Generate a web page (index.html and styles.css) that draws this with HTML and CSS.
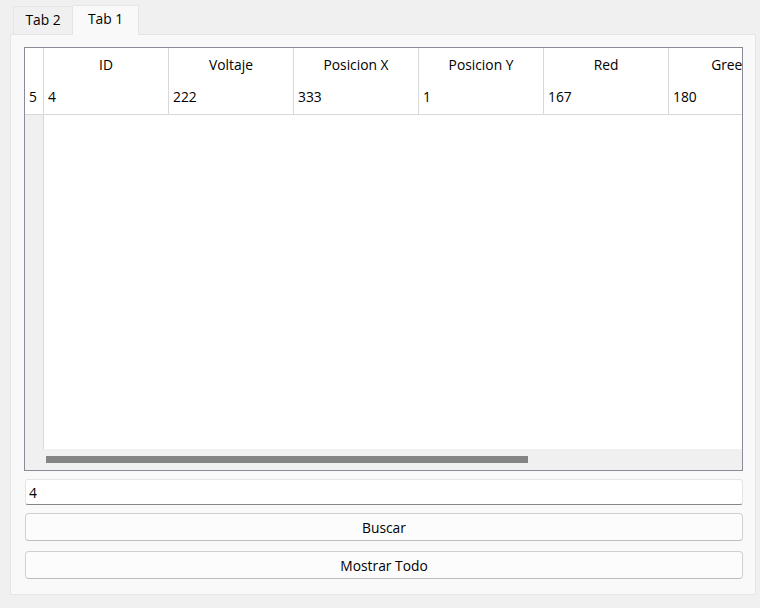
FILE: index.html
```html
<!DOCTYPE html>
<html>
<head>
<meta charset="utf-8">
<link rel="stylesheet" href="styles.css">
</head>
<body>
<div class="window">
  <div class="tabbar">
    <div class="tab">Tab 2</div>
    <div class="tab selected">Tab 1</div>
  </div>
  <div class="pane">
    <div class="table">
      <div class="grid">
        <div class="vhead">
          <div class="corner"></div>
          <div class="rowhead">5</div>
          <div class="vfill"></div>
        </div>
        <div class="body">
          <div class="hrow">
            <div class="hcell">ID</div>
            <div class="hcell">Voltaje</div>
            <div class="hcell">Posicion X</div>
            <div class="hcell">Posicion Y</div>
            <div class="hcell">Red</div>
            <div class="hcell">Green</div>
          </div>
          <div class="drow">
            <div class="dcell">4</div>
            <div class="dcell">222</div>
            <div class="dcell">333</div>
            <div class="dcell">1</div>
            <div class="dcell">167</div>
            <div class="dcell">180</div>
          </div>
        </div>
      </div>
      <div class="hscroll"><div class="thumb"></div></div>
    </div>
    <div class="lineedit">4</div>
    <div class="button">Buscar</div>
    <div class="button second">Mostrar Todo</div>
  </div>
</div>
</body>
</html>
```

FILE: styles.css
```css
* { box-sizing: border-box; }
html, body {
  margin: 0;
  padding: 0;
  background: #f0f0f0;
  width: 760px;
  height: 608px;
  overflow: hidden;
  font-family: "Segoe UI", "Open Sans", "Noto Sans", sans-serif;
  font-size: 13.8px;
  color: #000;
}
.window {
  padding: 5px 0 0 10px;
}
.tabbar {
  display: flex;
  align-items: flex-end;
  height: 29px;
  padding-left: 3px;
}
.tab {
  height: 28px;
  width: 60px;
  border: 1px solid #e5e5e5;
  border-bottom: none;
  background: #f0f0f0;
  display: flex;
  align-items: center;
  justify-content: center;
  padding-bottom: 2px;
}
.tab.selected {
  width: 66px;
  height: 30px;
  margin-bottom: -1px;
  background: #f9f9f9;
  border-left: none;
  position: relative;
  z-index: 1;
  padding-bottom: 4px;
}
.pane {
  width: 746px;
  height: 561px;
  border: 1px solid #e5e5e5;
  background: #f9f9f9;
  padding: 12px 0 0 13px;
  display: flex;
  flex-direction: column;
}
.table {
  width: 719px;
  height: 424px;
  flex: none;
  border: 1px solid #8a8b96;
  background: #fff;
  display: flex;
  flex-direction: column;
  overflow: hidden;
}
.grid {
  flex: 1;
  display: flex;
  overflow: hidden;
}
.vhead {
  width: 19px;
  flex: none;
  display: flex;
  flex-direction: column;
  border-right: 1px solid #d8d8d8;
}
.corner { height: 33px; background: #fff; }
.rowhead {
  height: 34px;
  background: #fff;
  padding-left: 4px;
  padding-bottom: 2px;
  display: flex;
  align-items: center;
  border-bottom: 1px solid #d8d8d8;
}
.vfill { flex: 1; background: #f0f0f0; }
.body {
  flex: 1;
  overflow: hidden;
}
.hrow, .drow {
  display: flex;
  width: 800px;
}
.hrow { height: 33px; }
.drow { height: 34px; border-bottom: 1px solid #d8d8d8; }
.hcell {
  width: 125px;
  flex: none;
  border-right: 1px solid #d8d8d8;
  display: flex;
  align-items: center;
  justify-content: center;
}
.dcell {
  width: 125px;
  flex: none;
  border-right: 1px solid #d8d8d8;
  display: flex;
  align-items: center;
  padding-left: 4px;
  padding-bottom: 2px;
}
.hscroll {
  height: 21px;
  flex: none;
  background: #f0f0f0;
  padding: 7px 0 0 21px;
}
.thumb {
  width: 482px;
  height: 7px;
  background: #858585;
}
.lineedit {
  margin: 8px 0 0 1px;
  width: 718px;
  height: 26px;
  flex: none;
  background: #fff;
  border: 1px solid #e5e5e5;
  border-bottom: 1px solid #868686;
  border-radius: 3px;
  display: flex;
  align-items: center;
  padding-left: 3px;
}
.button {
  margin: 8px 0 0 1px;
  width: 718px;
  height: 28px;
  flex: none;
  background: #fcfcfc;
  border: 1px solid #d0d0d0;
  border-bottom-color: #bdbdbd;
  border-radius: 4px;
  display: flex;
  align-items: center;
  justify-content: center;
}
.button.second { margin-top: 10px; }
```
